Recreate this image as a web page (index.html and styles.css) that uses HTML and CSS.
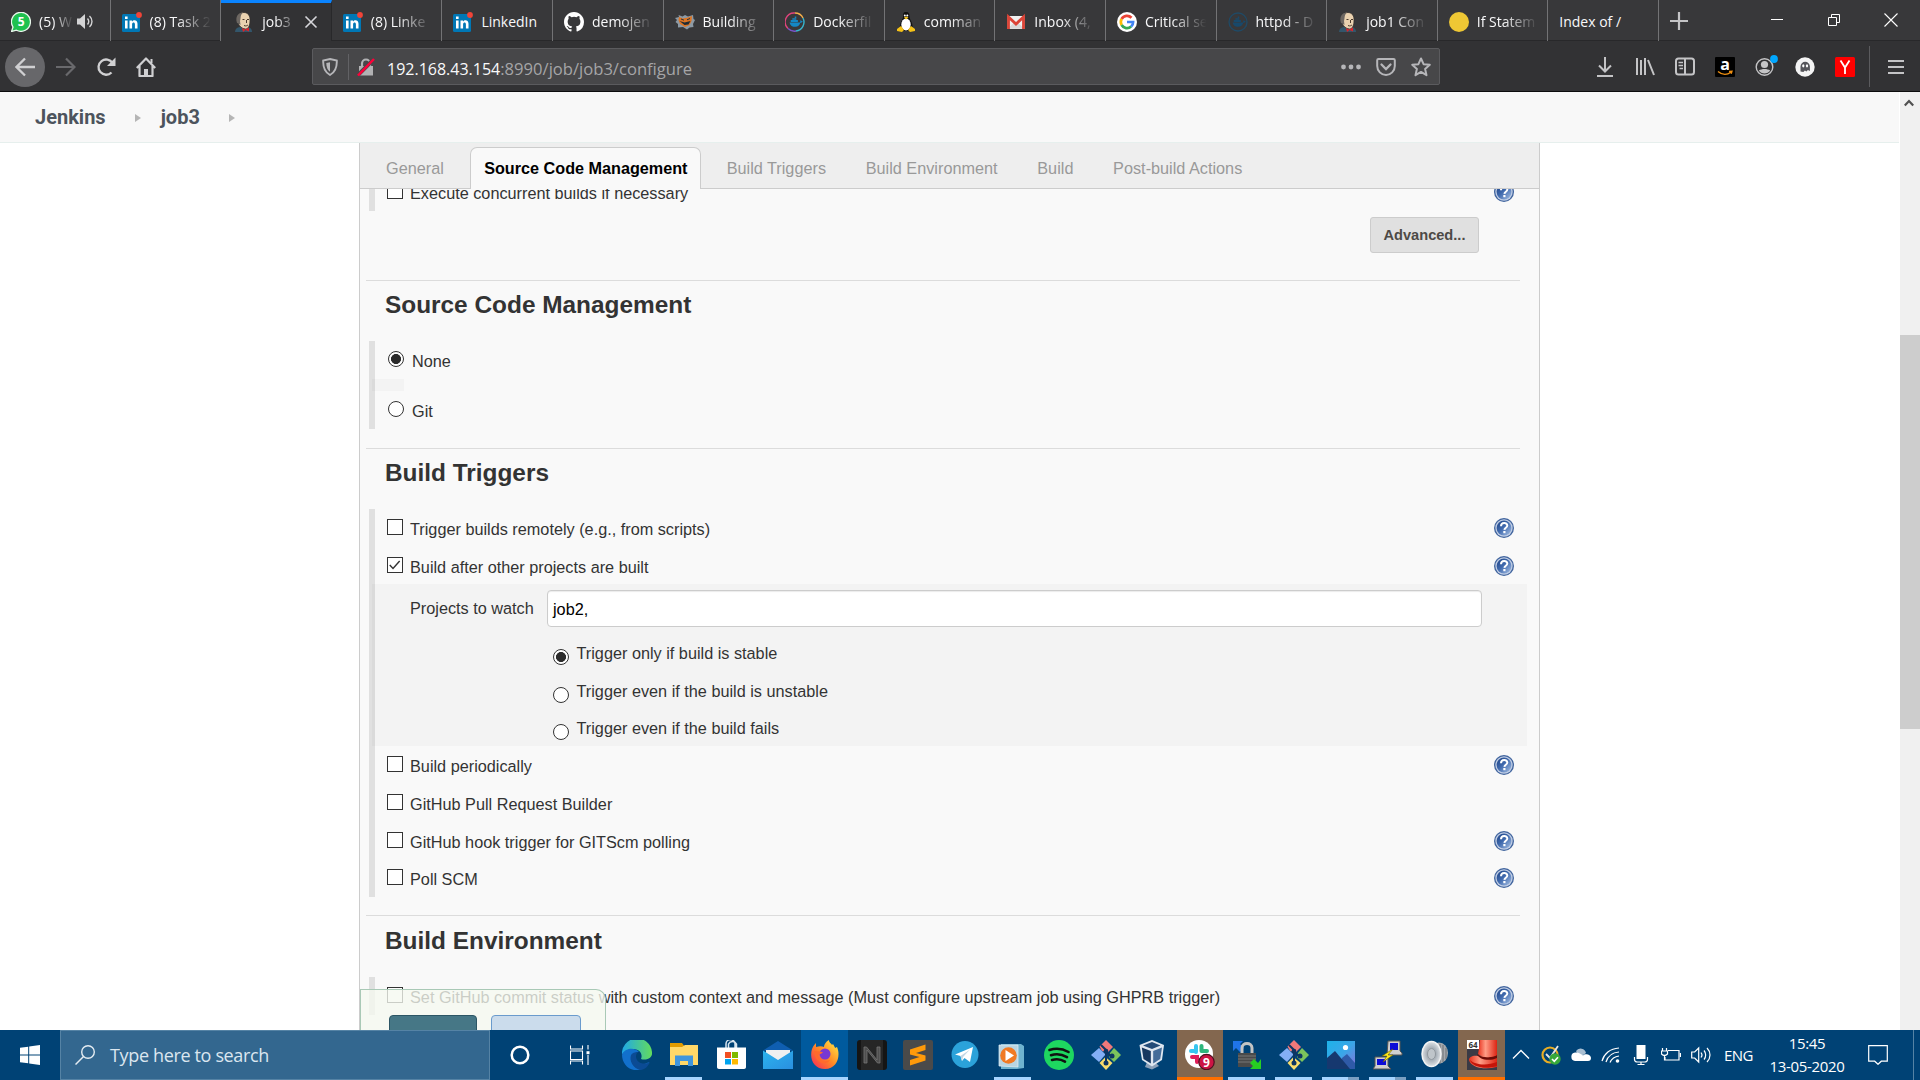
FILE: index.html
```html
<!DOCTYPE html>
<html lang="en">
<head>
<meta charset="utf-8">
<title>job3 Config [Jenkins]</title>
<link rel="stylesheet" href="styles.css">
</head>
<body>
<svg class="defs" width="0" height="0">
  <defs>
    <linearGradient id="gHelp" x1="0" y1="0" x2="1" y2="1"><stop offset="0" stop-color="#1d4284"/><stop offset=".45" stop-color="#3f69ad"/><stop offset="1" stop-color="#a9c2e6"/></linearGradient>
    <linearGradient id="gEdge" x1="0" y1="0" x2="1" y2="0"><stop offset="0" stop-color="#1fa7e8"/><stop offset="1" stop-color="#63dc5c"/></linearGradient>
    <linearGradient id="gFox" x1="1" y1="0" x2="0" y2="1"><stop offset="0" stop-color="#fff14a"/><stop offset=".5" stop-color="#ff8a24"/><stop offset="1" stop-color="#f5225b"/></linearGradient>
    <linearGradient id="gMail" x1="0" y1="0" x2="1" y2="1"><stop offset="0" stop-color="#2bb4ee"/><stop offset="1" stop-color="#2a8fe0"/></linearGradient>
    <linearGradient id="gPic" x1="0" y1="0" x2="1" y2="1"><stop offset="0" stop-color="#1db2e8"/><stop offset=".5" stop-color="#3aa6e8"/><stop offset="1" stop-color="#8a6fd8"/></linearGradient>
    <linearGradient id="gHat" x1="0" y1="0" x2="1" y2="0"><stop offset="0" stop-color="#e8301c"/><stop offset=".4" stop-color="#ff9c85"/><stop offset="1" stop-color="#dd2413"/></linearGradient>
    <radialGradient id="gSpk"><stop offset="0" stop-color="#e8e8e8"/><stop offset=".5" stop-color="#a8b0b8"/><stop offset="1" stop-color="#dfe3e6"/></radialGradient>
  </defs>
  <symbol id="linkedin" viewBox="0 0 20 20"><rect y="2" width="18" height="18" rx="1.500" fill="#0077b5"/><path d="M3 8.500h2.600v8H3zM3 4.500h2.600v2.400H3zM7.500 8.500H10v1.200c1.500-2.300 5.500-1.800 5.500 2v4.800h-2.600v-4.300c0-2.500-2.800-2.300-2.800 0v4.300H7.500z" fill="#fff"/><circle cx="17" cy="3" r="2.900" fill="#f04438"/></symbol>
  <symbol id="jenkins" viewBox="0 0 20 20"><path d="M1 20c0-3 2-4.500 5-5h7c3 0 5 2 5 5z" fill="#33566b"/><path d="M4.500 8C3.500 3 6 .5 10 .5S16.500 4 16 9c0 3-1 8-4.500 8s-6-3-7-5z" fill="#ead2b0" stroke="#33302d" stroke-width=".8"/><path d="M3 11C1 5 4 .5 9 .5 6 3 7 6 6 9l.5 4-2-1.500z" fill="#6d6762"/><path d="M8.500 7.500h2M13 7.500h2M10 13.500c2 1 3 0 4-.5M12.500 8v3" stroke="#4b3a2d" fill="none" stroke-width="1"/><path d="M8 16l3 1.500 4-2v4l-3.500-1.500L9 20z" fill="#d8232a"/></symbol>
  <symbol id="help" viewBox="0 0 20 20"><circle cx="10" cy="10" r="10" fill="#3f639d"/><circle cx="10" cy="10" r="8.700" fill="#c0cde4"/><circle cx="10" cy="10" r="7.400" fill="url(#gHelp)"/><path d="M7 8.200c0-4.200 6.300-4.200 6.300-.6 0 2.300-2.600 2-2.900 4.200" fill="none" stroke="#fff" stroke-width="2"/><rect x="9.300" y="13" width="2.200" height="2.200" fill="#fff"/></symbol>
  <symbol id="git" viewBox="0 0 30 30"><path d="M15 0l7 7-5 5-6-1-2.500-4.500z" fill="#f0787a"/><path d="M8 8l6.500 6.500L8 22 0 15z" fill="#83aef5"/><path d="M23 8l7 7-7 7-5-5 1-4z" fill="#7cc35c"/><path d="M8.500 23l6-6 7 6-6.500 7z" fill="#f8dc6c"/><path d="M10 5l5 5v15M15 12l6 5" stroke="#0d3562" stroke-width="2" fill="none"/><circle cx="15" cy="11" r="2.300" fill="#0d3562"/><circle cx="15" cy="23" r="2.500" fill="#0d3562"/><circle cx="21" cy="16" r="2.500" fill="#0d3562"/></symbol>
  <symbol id="docker" viewBox="0 0 20 20"><path d="M2.500 10.500h13c.5-1 1-2 .5-3 1.500 1 2 1.500 3 1.500-1 1.500-1.500 2-3 2-1 3-3 5-6 5-4 0-6.500-1.500-7.500-5.500z"/><path d="M4 7.500h9v2.500H4zM6 5.200h5v2H6zM9 3h2v2H9z"/></symbol>
</svg>

<div class="screen">
  <header class="tabstrip">
    <div class="tab"><svg viewBox="0 0 20 20"><path d="M.5 19.500l1.500-4.500a9.500 9.500 0 1 1 3.500 3.200z" fill="#1fc14f" stroke="#e9f7ec" stroke-width="1.300"/><text x="10.200" y="14.300" text-anchor="middle" font-size="12" font-weight="700" fill="#fff" font-family="Open Sans">5</text></svg><span class="label label-short">(5) W</span><svg class="speaker" viewBox="0 0 18 16"><path d="M0 5h3l5-4.500v15L3 11H0z" fill="#d4d4d5"/><path d="M10.500 5c1.500 1.800 1.500 4.200 0 6M12.500 2.500c3.300 3 3.300 8 0 11" fill="none" stroke="#d4d4d5" stroke-width="1.400"/></svg></div>
    <div class="tab"><svg><use href="#linkedin"/></svg><span class="label">(8) Task 2</span></div>
    <div class="tab active"><svg><use href="#jenkins"/></svg><span class="label label-short">job3</span><svg class="close" viewBox="0 0 14 14"><path d="M1.500 1.500l11 11M12.500 1.500l-11 11" stroke="#d7d7db" stroke-width="1.600"/></svg></div>
    <div class="tab"><svg><use href="#linkedin"/></svg><span class="label">(8) Linke</span></div>
    <div class="tab"><svg><use href="#linkedin"/></svg><span class="label label-full">LinkedIn</span></div>
    <div class="tab"><svg viewBox="0 0 16 16"><path fill="#fff" d="M8 0C3.580 0 0 3.580 0 8c0 3.540 2.290 6.530 5.470 7.590.4.070.55-.17.55-.38v-1.490c-2.010.37-2.530-.49-2.690-.94-.09-.23-.48-.94-.82-1.130-.28-.15-.68-.52-.01-.53.63-.01 1.080.58 1.230.82.72 1.210 1.870.87 2.330.66.07-.52.28-.87.51-1.070-1.780-.2-3.640-.89-3.640-3.950 0-.87.31-1.590.82-2.150-.08-.2-.36-1.020.08-2.120 0 0 .67-.21 2.200.82a7.600 7.600 0 0 1 4 0c1.530-1.040 2.200-.82 2.200-.82.44 1.100.16 1.920.08 2.120.51.56.82 1.270.82 2.150 0 3.070-1.870 3.750-3.650 3.950.29.25.54.73.54 1.480v2.190c0 .21.15.46.55.38A8 8 0 0 0 16 8c0-4.420-3.580-8-8-8z"/></svg><span class="label">demojen</span></div>
    <div class="tab"><svg viewBox="0 0 20 20"><path d="M0 6l4-1-.5-2 4 1.500L10 3l3 1.500 5-1.500.5 4 1.500 1-2 4 .5 3-4 .5-2.500 2-4-2.500-5 .5L3 12 .5 10 2 8z" fill="#8d9aa5"/><path d="M4 5l4 1.500 5-1 4-1.500-.5 5-2 4-4.500 2-5-3-1.500-4z" fill="#dd7422"/><path d="M4.500 9l5 1.500 6-1.500-2 3.500-4 .5z" fill="#202b34"/><path d="M6 7l3 1.200M12 7.800l3-1.300" stroke="#25303a"/></svg><span class="label">Building</span></div>
    <div class="tab"><svg viewBox="0 0 20 20"><path d="M3 16.500A9 9 0 0 1 10 1" stroke="#e0447c" stroke-width="1.400" fill="none"/><path d="M10 1a9 9 0 0 1 8 5" stroke="#f6b04a" stroke-width="1.400" fill="none"/><path d="M18 6a9 9 0 0 1-7 13" stroke="#38b6cf" stroke-width="1.400" fill="none"/><path d="M11 19a9 9 0 0 1-8-2.500" stroke="#7854c8" stroke-width="1.400" fill="none"/><use href="#docker" x="2.500" y="2" width="16" height="16" fill="#1488c6"/></svg><span class="label">Dockerfil</span></div>
    <div class="tab"><svg viewBox="0 0 20 20"><path d="M10 0c3 0 3.500 2 3.500 5 0 2 3 5 3 9 0 3-2 5-6.500 5s-6.500-2-6-5c0-4 3-7 3-9C7 2 7 0 10 0z" fill="#111"/><ellipse cx="10" cy="12.500" rx="4.700" ry="6" fill="#fff"/><circle cx="8.800" cy="3.500" r="1" fill="#fff"/><circle cx="11.300" cy="3.500" r="1" fill="#fff"/><path d="M8 5.500l2-1 2.500 1L10 7.500zM1 17l4-3 3 4-2 2-5-1zM19 17l-4-3-3 4 2 2 5-1z" fill="#f6c217"/></svg><span class="label">comman</span></div>
    <div class="tab"><svg viewBox="0 0 20 20"><path d="M1.500 4h17v13h-17z" fill="#f1f1f1"/><path d="M1.500 16.800L10 9l8.500 7.800z" fill="#d9d9d9"/><path d="M2.500 17V5L10 12l7.500-7v12" fill="none" stroke="#dc4437" stroke-width="2.800"/></svg><span class="label">Inbox (4,</span></div>
    <div class="tab"><svg viewBox="0 0 20 20"><circle cx="10" cy="10" r="10" fill="#fff"/><g fill="none" stroke-width="2.700"><path d="M14.500 5.800A6.200 6.200 0 0 0 4.600 7" stroke="#ea4335"/><path d="M4.600 7a6.200 6.200 0 0 0 0 6" stroke="#fbbc05"/><path d="M4.600 13a6.200 6.200 0 0 0 9.500 1.600" stroke="#34a853"/><path d="M14.100 14.600A6.200 6.200 0 0 0 16.100 10H10" stroke="#4285f4"/></g></svg><span class="label">Critical se</span></div>
    <div class="tab"><svg viewBox="0 0 20 20"><circle cx="10" cy="10" r="9" fill="none" stroke="#1f4a66" stroke-width="1.300"/><use href="#docker" x="2.500" y="2" width="16" height="16" fill="#18496b"/></svg><span class="label">httpd - D</span></div>
    <div class="tab"><svg><use href="#jenkins"/></svg><span class="label">job1 Con</span></div>
    <div class="tab"><svg viewBox="0 0 20 20"><circle cx="10" cy="10" r="10" fill="#eec734"/></svg><span class="label">If Statem</span></div>
    <div class="tab"><span class="label label-full">Index of /</span></div>
    <svg class="newtab" viewBox="0 0 18 18"><path d="M9 0v18M0 9h18" stroke="#c4c4c6" stroke-width="2.200"/></svg>
    <div class="winbtns">
      <svg viewBox="0 0 14 14"><path d="M1 6.500h12" stroke="#fff"/></svg>
      <svg viewBox="0 0 14 14"><path d="M1.500 4.500h8v8h-8zM4.500 4.500v-3h8v8h-3" fill="none" stroke="#fff"/></svg>
      <svg viewBox="0 0 14 14"><path d="M.5.500l13 13M13.500.500l-13 13" stroke="#fff" stroke-width="1.100"/></svg>
    </div>
  </header>

  <nav class="navbar">
    <div class="navleft">
      <span class="back"><svg viewBox="0 0 20 20"><path d="M20 10H1.500M10 1.500L1.500 10l8.500 8.500" fill="none" stroke="#d0d0d2" stroke-width="2.300"/></svg></span>
      <svg viewBox="0 0 20 20"><path d="M0 10h18.500M10 1.500l8.500 8.500-8.500 8.500" fill="none" stroke="#69696c" stroke-width="2.200"/></svg>
      <svg viewBox="0 0 20 20"><path d="M15.500 15.500a7.600 7.600 0 1 1 1-9.500" fill="none" stroke="#d0d0d2" stroke-width="2.300"/><path d="M19.500.500v8.500H11z" fill="#d0d0d2"/></svg>
      <svg viewBox="0 0 20 20"><path d="M.8 11L10 1.500l9.200 9.500M3.500 9v10h13V9" fill="none" stroke="#d0d0d2" stroke-width="2.200" stroke-linejoin="round"/><path d="M8 12h4v7H8z" fill="#d0d0d2"/><path d="M14.500 2h2v4h-2z" fill="#d0d0d2"/></svg>
    </div>
    <div class="urlbar">
      <svg class="shield" viewBox="0 0 16 18"><path d="M8 1l6.800 1.500c.3 7-1.300 11.500-6.800 14.500C2.500 14 .9 9.500 1.200 2.500z" fill="none" stroke="#b6b6b9" stroke-width="1.900"/><path d="M8 4.200v9.600C5.300 12 4.400 9 4.300 5z" fill="#b6b6b9"/></svg>
      <i class="urlsep"></i>
      <svg class="lock" viewBox="0 0 18 18"><path d="M2 8h14v9.500H2z" fill="#b1b1b3"/><path d="M5 8.500V5.500a4 4 0 0 1 8 0v3" fill="none" stroke="#b1b1b3" stroke-width="2.200"/><path d="M1 17L17 1" stroke="#48484b" stroke-width="4"/><path d="M1 17.500L17 1" stroke="#ff0039" stroke-width="2.500"/></svg>
      <span class="url"><b>192.168.43.154</b>:8990/job/job3/configure</span>
      <div class="urlicons">
        <svg viewBox="0 0 20 20"><g fill="#b6b6b9"><circle cx="2.500" cy="10" r="2.400"/><circle cx="10" cy="10" r="2.400"/><circle cx="17.500" cy="10" r="2.400"/></g></svg>
        <svg viewBox="0 0 20 20"><path d="M2.500 2h15c.8 0 1.300.5 1.300 1.300V9c0 5-4 9-8.800 9S1.200 14 1.200 9V3.300C1.200 2.500 1.700 2 2.500 2z" fill="none" stroke="#b6b6b9" stroke-width="2"/><path d="M5.500 7.500L10 12l4.500-4.500" fill="none" stroke="#b6b6b9" stroke-width="2.300" stroke-linecap="round"/></svg>
        <svg viewBox="0 0 20 20"><path d="M10 1.500l2.600 5.700 6.200.6-4.700 4.100 1.400 6.300-5.500-3.300-5.500 3.300 1.400-6.300-4.700-4.100 6.200-.6z" fill="none" stroke="#b6b6b9" stroke-width="2" stroke-linejoin="round"/></svg>
      </div>
    </div>
    <div class="navright">
      <svg viewBox="0 0 20 20"><path d="M10 0v14M4 8.500l6 6 6-6M2 19h16" fill="none" stroke="#c4c4c6" stroke-width="2"/></svg>
      <svg viewBox="0 0 20 20"><path d="M2 1v17M6 3v15M10 1v17M13 3l6 15" fill="none" stroke="#c4c4c6" stroke-width="2"/></svg>
      <svg viewBox="0 0 20 20"><rect x="1" y="1.500" width="18" height="16" rx="2.500" fill="none" stroke="#c4c4c6" stroke-width="2"/><path d="M10 2v15" stroke="#c4c4c6" stroke-width="2"/><path d="M3.500 5.500H8M3.500 8.500H8M4.500 11.500H8" stroke="#c4c4c6" stroke-width="1.300"/></svg>
      <svg viewBox="0 0 20 20"><rect width="20" height="20" rx="1" fill="#000"/><text x="10" y="12.500" text-anchor="middle" font-size="16" font-weight="700" fill="#fff" font-family="Open Sans">a</text><path d="M3 14.500c4 3.500 9 3.500 13 .8M14 14.500l3-.3-.8 2.500" fill="none" stroke="#f29111" stroke-width="1.300"/></svg>
      <svg viewBox="0 0 20 20" overflow="visible"><circle cx="9.500" cy="10" r="8.300" fill="none" stroke="#c4c4c6" stroke-width="1.400"/><circle cx="9.500" cy="7.500" r="3.600" fill="#c4c4c6"/><path d="M3.800 13.500c3-2 8.500-2 11.400 0-2.500 4-8.900 4-11.400 0z" fill="#c4c4c6"/><circle cx="19" cy="2" r="3.900" fill="#00a7ff"/></svg>
      <svg viewBox="0 0 20 20"><circle cx="10" cy="10" r="9.700" fill="#f4f4f4"/><path d="M5.500 14.500V9.500a4.700 4.700 0 0 1 9.400 0v4.500l-2-1-1.500 1.500-1.500-1-1.500 1.500z" fill="#55555a"/><ellipse cx="8.300" cy="8.800" rx="1.100" ry="1.600" fill="#fff"/><ellipse cx="12" cy="8.800" rx="1.100" ry="1.600" fill="#fff"/></svg>
      <svg viewBox="0 0 20 20"><rect width="20" height="20" rx="1.500" fill="#f00"/><path d="M5.500 3.500L10 10.500l4.500-7M10 10v7" fill="none" stroke="#fff" stroke-width="1.800"/></svg>
    </div>
    <i class="navsep"></i>
    <svg class="menu" viewBox="0 0 16 18"><path d="M0 3h16M0 9h16M0 15h16" stroke="#c4c4c6" stroke-width="2.200"/></svg>
  </nav>

  <div class="viewport">
    <main class="page">
      <div class="breadcrumb"><b>Jenkins</b><i></i><b>job3</b><i></i></div>
      <div class="panel">
        <div class="configtabs">
          <span>General</span><span class="current">Source Code Management</span><span>Build Triggers</span><span>Build Environment</span><span>Build</span><span>Post-build Actions</span>
        </div>
        <div class="form">
          <div class="group group-top">
            <div class="row"><i class="check"></i><span>Execute concurrent builds if necessary</span><svg class="help"><use href="#help"/></svg></div>
          </div>
          <div class="advanced"><button>Advanced...</button></div>
          <section>
            <h2>Source Code Management</h2>
            <div class="group">
              <div class="row row-scm"><i class="radio on"></i><span>None</span></div>
              <div class="spacer"></div>
              <div class="row row-scm"><i class="radio"></i><span>Git</span></div>
            </div>
          </section>
          <section>
            <h2>Build Triggers</h2>
            <div class="group">
              <div class="row"><i class="check"></i><span>Trigger builds remotely (e.g., from scripts)</span><svg class="help"><use href="#help"/></svg></div>
              <div class="row"><i class="check"><svg viewBox="0 0 12 12"><path d="M1.500 6l2.800 3L10 2.500" fill="none" stroke="#333" stroke-width="1.200"/></svg></i><span>Build after other projects are built</span><svg class="help"><use href="#help"/></svg></div>
              <div class="nested">
                <div class="field"><label>Projects to watch</label><div class="input">job2,</div></div>
                <div class="option"><i class="radio on"></i><span>Trigger only if build is stable</span></div>
                <div class="option"><i class="radio"></i><span>Trigger even if the build is unstable</span></div>
                <div class="option"><i class="radio"></i><span>Trigger even if the build fails</span></div>
              </div>
              <div class="row"><i class="check"></i><span>Build periodically</span><svg class="help"><use href="#help"/></svg></div>
              <div class="row"><i class="check"></i><span>GitHub Pull Request Builder</span></div>
              <div class="row"><i class="check"></i><span>GitHub hook trigger for GITScm polling</span><svg class="help"><use href="#help"/></svg></div>
              <div class="row"><i class="check"></i><span>Poll SCM</span><svg class="help"><use href="#help"/></svg></div>
            </div>
          </section>
          <section>
            <h2>Build Environment</h2>
            <div class="group">
              <div class="row"><i class="check"></i><span>Set GitHub commit status with custom context and message (Must configure upstream job using GHPRB trigger)</span><svg class="help"><use href="#help"/></svg></div>
            </div>
          </section>
        </div>
        <div class="sticker"><i class="save"></i><i class="apply"></i></div>
      </div>
    </main>
    <aside class="scroll"><svg viewBox="0 0 10 8"><path d="M.8 6.500L5 2l4.200 4.500" fill="none" stroke="#505050" stroke-width="2.200"/></svg><i></i></aside>
  </div>

  <footer class="taskbar">
    <div class="start"><svg viewBox="0 0 20 20"><path d="M0 2.800L8.200 1.700v7.800H0zM9.200 1.500L20 0v9.500H9.200zM0 10.500h8.200v7.800L0 17.200zM9.200 10.500H20V20L9.200 18.500z" fill="#fff"/></svg></div>
    <div class="search"><svg viewBox="0 0 20 20"><circle cx="13" cy="7" r="6.300" fill="none" stroke="#e4ecf2" stroke-width="1.400"/><path d="M8.500 11.500L.5 19.500" stroke="#e4ecf2" stroke-width="1.500"/></svg><span>Type here to search</span></div>
    <div class="sys"><svg viewBox="0 0 20 20"><circle cx="10" cy="10" r="8.300" fill="none" stroke="#fff" stroke-width="2.500"/></svg></div>
    <div class="sys"><svg viewBox="0 0 20 20"><path d="M.5.500v3.500h12V.500M.5 6h12v8.500H.5zM.5 19.500V16h12v3.500M18 0v4.500M18 10v10" fill="none" stroke="#fff" stroke-width="1.100"/><path d="M16.500 6.200h3v3h-3z" fill="#fff"/></svg></div>
    <div class="apps">
      <div class="app"><svg viewBox="0 0 30 30"><path d="M0 15A15 15 0 0 1 30 12c1 6-6 9-11 7 3-8-6-12-13-9-4 2-6 4-6 5z" fill="url(#gEdge)"/><path d="M0 15c1-6 12-9 17-3-5-1-7 7-1 11 4 2 8 1 11-1-3 7-10 9-15 8C5 29 0 22 0 15z" fill="#1270cc"/><path d="M9 15c-2 6 2 13 9 15 4 0 8-3 10-8-5 3-13 2-14-5 0-3 1-4 2-5-3 0-6 1-7 3z" fill="#0b4b94"/></svg></div>
      <div class="app run"><svg viewBox="0 0 30 30"><path d="M1 3h12l3 4H1z" fill="#e09b00"/><path d="M1 7h12l3-2h13v20H1z" fill="#ffd868"/><path d="M6 26V15.500h18V26h-5v-5h-8v5z" fill="#3f95dc"/></svg></div>
      <div class="app"><svg viewBox="0 0 30 30"><path d="M10 10V4a4.500 4.500 0 0 1 9 0v6M12.500 8V4a4.500 4.500 0 0 1 8 0v4" fill="none" stroke="#d9e6ef" stroke-width="1.500"/><path d="M1 7.500h29V27c0 1.200-.8 2-2 2H3c-1.200 0-2-.8-2-2z" fill="#fff"/><path d="M9 12h6v6H9z" fill="#f25022"/><path d="M16 12h6v6h-6z" fill="#7fba00"/><path d="M9 19h6v5.500H9z" fill="#00a4ef"/><path d="M16 19h6v5.500h-6z" fill="#ffb900"/></svg></div>
      <div class="app"><svg viewBox="0 0 30 30"><path d="M0 10.500L15 1l15 9.500z" fill="#0f5eb0"/><path d="M3 10h24v10H3z" fill="#f0f0f0"/><path d="M0 10.500L15 20l15-9.500V29H0z" fill="url(#gMail)"/></svg></div>
      <div class="app run current"><svg viewBox="0 0 30 30"><path d="M2 9c1-3 3-5 4-6v4c3-1 6-1 8 0 0-3 3-6 5-7 0 3 2 3 3 5l1-1c1 2 2 3 2 4l2-1c4 9 0 22-12 22C4 29-1 19 2 9z" fill="url(#gFox)"/><circle cx="15" cy="14" r="5.500" fill="#7838d3"/><path d="M4 11c5 0 6 1 9 1-2 3-6 2-5 5 1 4 7 5 12 3-4 6-15 4-16-9z" fill="#ff6a2c"/></svg></div>
      <div class="app"><svg viewBox="0 0 30 30"><rect y="0" width="30" height="30" rx="3" fill="#151515"/><path d="M4 0h22v30H4z" fill="#262626"/><path d="M7 23V7h2.500L20 20V7h3v16h-2.500L10 10v13z" fill="#4f4f4f" stroke="#777" stroke-width=".8"/></svg></div>
      <div class="app"><svg viewBox="0 0 30 30"><rect width="30" height="30" rx="2" fill="#4a4a4a"/><path d="M7 9.500l15.500-5v5.500l-9.500 3 9.500 2.500v5L7 25.500V20l9.500-3L7 14.500z" fill="#ff9a0a"/></svg></div>
      <div class="app"><svg viewBox="0 0 30 30"><circle cx="15" cy="14.500" r="13.500" fill="#2ba2da"/><path d="M5 14.500L23 7l-3 15-5.500-4-2.500 3-1.500-5z" fill="#fff"/><path d="M10.500 16L20 9.500l-7 7.500-1 4z" fill="#c3d7e5"/></svg></div>
      <div class="app run"><svg viewBox="0 0 30 30"><path d="M4 4h20l3 2v22l-7 1H4z" fill="#6fb3cf"/><path d="M2 5h19v22l-19-1z" fill="#b9d5e2" stroke="#e2eff5" stroke-width=".7"/><circle cx="11.500" cy="15.500" r="8.300" fill="#f07a24"/><path d="M8.500 10l8.500 5.500L8.500 21z" fill="#fff"/></svg></div>
      <div class="app"><svg viewBox="0 0 30 30"><circle cx="15" cy="15" r="15" fill="#1ed760"/><path d="M5.500 10c6-2 13-1.500 19 2M7 15.200c5-1.700 11-1 16 1.900M8 20c4.500-1.300 9-.8 13 1.600" fill="none" stroke="#111" stroke-width="2.600" stroke-linecap="round"/></svg></div>
      <div class="app"><svg><use href="#git"/></svg></div>
      <div class="app"><svg viewBox="0 0 30 30"><path d="M9 22h8l4 4-7 3.500-7-2.500z" fill="#8ba0b8"/><path d="M14 0l12 5-2 15-10 6.500L4 20 1.500 5z" fill="#dfe7f0"/><path d="M14 2l8.500 3.500L14 9 5 5.500z" fill="#234b78"/><path d="M3.800 7.500L12.800 11v12.500L5.500 19z" fill="#16375f"/><path d="M24 7.500L15.200 11v12.500l7-4.500z" fill="#446c99"/></svg></div>
      <div class="app alert"><svg viewBox="0 0 30 30"><circle cx="14" cy="14" r="14" fill="#fff"/><g stroke-width="4" stroke-linecap="round"><path d="M11 6v6M6 11h3" stroke="#36c5f0"/><path d="M16.500 6v5M19 11h3" stroke="#2eb67d"/><path d="M7 17h5v5" stroke="#e01e5a" fill="none"/></g><circle cx="21.500" cy="22" r="7.700" fill="#cc1444" stroke="#4e1220" stroke-width="1.200"/><text x="21.500" y="26.500" text-anchor="middle" font-size="12" font-weight="700" fill="#fff" font-family="Open Sans">9</text></svg></div>
      <div class="app run"><svg viewBox="0 0 30 30"><path d="M1 1h10L8 4l4 4-4 4-4-4-3 3z" fill="#1f74e8"/><path d="M10 14V8c0-6 10-6 10 0v6" fill="none" stroke="#c4c4c4" stroke-width="3"/><path d="M6 13h18v14H6z" fill="#4a4a4a"/><path d="M6 16h18M6 19h18M6 22h18" stroke="#777"/><path d="M29 29H18l3-3-3-3 4-4 4 4 3-4z" fill="#27cf22"/></svg></div>
      <div class="app run"><svg><use href="#git"/></svg></div>
      <div class="app run stack"><svg viewBox="0 0 30 30"><path d="M1 1h28v28H1z" fill="url(#gPic)"/><circle cx="19.500" cy="7.500" r="2.600" fill="#fff"/><path d="M16 18l5-4 8 9v6H14z" fill="#2f5aa8"/><path d="M1 18l8-7 15 18H1z" fill="#16386f"/></svg></div>
      <div class="app run stack"><svg viewBox="0 0 30 30"><path d="M15 1h12v10l2 2v2H14z" fill="#cfcfcf" stroke="#555"/><path d="M17 3h8v7h-8z" fill="#0b0bd6"/><path d="M2 17h13v9l3 3H0l2-3z" fill="#cfcfcf" stroke="#555"/><path d="M4 19h9v6H4z" fill="#0b0bd6"/><path d="M20 9l-11 7h5l-4 6 10-7h-5z" fill="#ffec1e" stroke="#6a5d00" stroke-width=".6"/></svg></div>
      <div class="app run"><svg viewBox="0 0 30 30"><ellipse cx="19" cy="13" rx="9" ry="10.500" fill="#a5a9ad"/><path d="M20 4v20M23 5v17M26 8v11" stroke="#6c7175"/><ellipse cx="11.500" cy="14" rx="9.500" ry="12.500" fill="url(#gSpk)" stroke="#f4f4f4" stroke-width="1.500"/><ellipse cx="11.500" cy="14" rx="4" ry="5.500" fill="#bfc5ca" stroke="#90979d"/></svg></div>
      <div class="app alert"><svg viewBox="0 0 30 30"><path d="M0 0h30v30H0z" fill="#3a3a45"/><path d="M30 14v13C18 30 4 28 2 20c0-3 4-5 9-4z" fill="url(#gHat)"/><path d="M3 20c5 5 17 6 27 2v4C18 30 5 27 3 20z" fill="#c41509"/><path d="M10 14c4 4 14 4 20 1v3c-8 4-19 1-20-4z" fill="#6d0b06"/><path d="M13 0h17v15c-5 3-14 3-19-1 1-4 1-9 2-14z" fill="url(#gHat)"/><path d="M0 0h12v9H0z" fill="#fff"/><text x="6" y="7.500" text-anchor="middle" font-size="8" font-weight="700" fill="#333" font-family="Open Sans">64</text></svg></div>
    </div>
    <div class="tray">
      <svg viewBox="0 0 20 20"><path d="M2 13.500l8-8 8 8" fill="none" stroke="#fff" stroke-width="1.300"/></svg>
      <svg viewBox="0 0 20 20"><circle cx="9" cy="10" r="7.500" fill="none" stroke="#e8ad25" stroke-width="2.200"/><path d="M5 9l4 4L17 1" fill="none" stroke="#e5e5e5" stroke-width="1.800"/><circle cx="14" cy="14" r="5.700" fill="#38a83a"/><path d="M11 14l2.300 2.300 3.700-4" fill="none" stroke="#fff" stroke-width="1.600"/></svg>
      <svg viewBox="0 0 20 20"><path d="M5 6a5.500 5.500 0 0 1 10 2l-7 5z" fill="#a9bfd2"/><path d="M4 16a4.300 4.300 0 0 1 0-8.500c3-.5 6 1 8 3 2-2.500 8-1 8 2.500 0 2-1 3-3 3z" fill="#fff"/></svg>
      <svg viewBox="0 0 20 20"><g fill="none" stroke="#fff" stroke-width="1.200"><path d="M1 16C3 9 9 3.500 18 3M5 17C6.500 12 11 7.500 18 7M9 17.500c1.500-3.500 4.500-6 9-6.500"/></g><circle cx="16.500" cy="16" r="1.800" fill="#fff"/></svg>
      <svg viewBox="0 0 20 20"><path d="M5.500 0h9v14h-9z" fill="#fff"/><path d="M3.500 12v2.500c0 2 1 2.500 3 2.500h7c2 0 3-.5 3-2.500V12M10 17v2.500M6.500 19.500h7" fill="none" stroke="#fff" stroke-width="1.200"/></svg>
      <svg viewBox="0 0 20 20"><path d="M7 5.500h11v9.500H4v-3M19.500 8v4M1.500 3v3M5.500 3v3M.5 6h6v3c-2 2-4 2-6 0zM3.500 10.500V15H5" fill="none" stroke="#fff" stroke-width="1.200"/></svg>
      <svg viewBox="0 0 20 20"><path d="M.7 7h3l4-4v14l-4-4h-3z" fill="none" stroke="#fff" stroke-width="1.200"/><path d="M10 7.500c1.200 1.500 1.200 3.500 0 5M13 5.500c2.200 2.500 2.200 6.500 0 9M16 3c4 4 4 10 0 14" fill="none" stroke="#fff" stroke-width="1.200"/></svg>
    </div>
    <span class="lang">ENG</span>
    <div class="clock"><span>15:45</span><span>13-05-2020</span></div>
    <svg class="notif" viewBox="0 0 20 20"><path d="M.7.700h18.600v15.500h-6L10 19.300l-3.300-3.100h-6z" fill="none" stroke="#fff" stroke-width="1.200"/></svg>
    <i class="peek"></i>
  </footer>
</div>
</body>
</html>
```
FILE: styles.css
```css
* { box-sizing: border-box; }
body { margin: 0; font-family: "Liberation Sans", Arial, sans-serif; font-size: 16.25px; color: #333; }
svg, i { display: block; flex: none; }
.defs { position: absolute; }
.screen { width: 1920px; height: 1080px; overflow: hidden; display: flex; flex-direction: column; }

/* Browser tab strip */
.tabstrip { flex: none; height: 41px; display: flex; background: #38383a; font-family: "Open Sans", sans-serif; font-size: 14px; color: #f9f9fa; border-bottom: 1px solid #28282a; }
.tab { width: 110.600px; flex: none; height: 41px; padding: 2px 0 0 11px; display: flex; align-items: center; gap: 5px; border-right: 1px solid #737375; }
.tab > svg { width: 20px; height: 20px; }
.tab.active { background: #323234; border-top: 3px solid #0a84ff; padding: 0 0 0 13px; border-right-color: #28282a; }
.label { flex: none; width: 70px; padding-left: 3px; white-space: nowrap; line-height: 22px; mask-image: linear-gradient(90deg, #000 42%, transparent 92%); }
.label-short { width: 41px; }
.tab .label-full { width: 75px; mask-image: none; }
.tab > .label-full:first-child { padding-left: 0; }
.tab .speaker { width: 18px; height: 17px; margin-left: -5px; }
.tab .close { width: 14px; height: 14px; margin-left: -1px; }
.newtab { width: 18px; height: 18px; margin: 12px 0 0 11px; }
.winbtns { margin-left: auto; padding: 13px 22px 0 0; display: flex; gap: 43px; }
.winbtns svg { width: 14px; height: 14px; }

/* Browser toolbar */
.navbar { height: 51px; flex: none; display: flex; align-items: center; padding-top: 1px; background: #323234; border-bottom: 1px solid #0c0c0d; }
.navleft { width: 312px; padding-left: 5px; display: flex; align-items: center; gap: 20px; }
.navleft svg { width: 20px; height: 20px; }
.navleft .back { width: 40px; height: 40px; margin-right: -9px; border-radius: 50%; background: #67676a; display: grid; place-items: center; }
.urlbar { width: 1128px; height: 37px; display: flex; align-items: center; background: #474749; border: 1px solid #5b5b5e; border-radius: 2px; font-family: "Open Sans", sans-serif; }
.shield { width: 16px; height: 18px; margin-left: 9px; }
.urlsep { width: 1px; height: 26px; margin: 0 8px 0 10px; background: #626265; }
.lock { width: 18px; height: 18px; }
.url { margin-left: 12px; padding-top: 3px; font-size: 16.600px; color: #a5a5a7; white-space: nowrap; }
.url b { font-weight: 400; font-size: 16px; color: #f9f9fa; }
.urlicons { margin-left: auto; margin-right: 8px; display: flex; gap: 15px; }
.urlicons svg { width: 20px; height: 20px; }
.navright { margin-left: 155px; display: flex; gap: 20px; }
.navright svg { width: 20px; height: 20px; }
.navsep { width: 1px; height: 41px; margin-left: 14px; background: #5b5b5e; }
.menu { width: 16px; height: 18px; margin-left: 18px; }

/* Jenkins page */
.viewport { height: 938px; flex: none; display: flex; background: #fff; }
.page { width: 1899px; flex: none; display: flex; flex-direction: column; }
.breadcrumb { height: 51px; flex: none; padding-left: 35px; display: flex; align-items: center; background: #f8f8f8; border-bottom: 1px solid #e6efed; font-family: Roboto, sans-serif; font-size: 20px; color: #4d545d; }
.breadcrumb b { line-height: 24px; }
.breadcrumb i { border-left: 6px solid #b5b5b5; border-top: 4.500px solid transparent; border-bottom: 4.500px solid transparent; margin: 1px 20px 0 29px; }
.panel { width: 1181px; height: 887px; margin-left: 359px; border: solid #ccc; border-width: 0 1px; background: #f9f9f9; position: relative; overflow: hidden; }
.configtabs { height: 46px; display: flex; align-items: flex-end; gap: 11.700px; padding-left: 12px; background: #eee; border-bottom: 1px solid #ccc; color: #999; }
.configtabs span { height: 41px; padding: 0 13px; line-height: 41px; border: 1px solid transparent; border-bottom: 0; white-space: nowrap; }
.configtabs .current { background: #f9f9f9; border-color: #ccc; border-radius: 7px 7px 0 0; color: #000; font-weight: 700; font-size: 16.200px; margin: 0 -.5px -1px .7px; height: 42px; }
.form { height: 841px; overflow: hidden; }
.group { margin-left: 9px; width: 1158px; border-left: 6px solid #e0e0e0; }
.group-top { margin-top: -16px; }
.row { height: 37.670px; padding: 10px 13px 0 12px; display: flex; align-items: flex-start; }
.row span { line-height: 20px; margin-left: 7px; white-space: nowrap; }
.check { width: 16px; height: 16px; border: 1px solid #333; background: #fff; }
.check svg { width: 14px; height: 14px; }
.radio { width: 16px; height: 16px; border: 1px solid #333; border-radius: 50%; background: #fff; }
.radio.on { background: radial-gradient(circle, #2b2b2b 0 4.700px, #fff 5.300px); }
.help { width: 20px; height: 20px; margin: -1px 0 0 auto; }
.advanced { height: 69.330px; padding: 6px 60px 0 0; display: flex; justify-content: flex-end; }
.advanced button { width: 109px; height: 36px; padding: 0; font: 700 14.600px "Liberation Sans", Arial, sans-serif; color: #4d4a46; background: #e0e0e0; border: 1px solid #ccc; border-radius: 3px; }
section { padding-bottom: 19px; }
section + section { padding-bottom: 18px; }
section::before { content: ""; display: block; width: 1154px; height: 1px; margin-left: 6px; background: #dcdcdc; }
h2 { height: 60px; margin: 0; padding: 9px 0 0 25px; font-size: 24.400px; line-height: 30px; }
section:last-child h2 { height: 61px; padding-top: 10px; }
.row-scm { height: 38px; padding-left: 13px; }
.row-scm span { margin-left: 8px; }
.spacer { width: 32px; height: 12px; margin-left: -3px; background: rgba(0,0,0,.025); }
.nested { height: 162px; margin-left: -3px; width: 1155px; background: rgba(0,0,0,.025); padding-top: 5px; }
.field { display: flex; align-items: center; height: 38px; margin-bottom: 7px; padding-left: 38px; }
.field label { width: 137px; padding-top: 1px; }
.input { width: 935px; height: 37px; padding-left: 5px; line-height: 36px; background: #fff; border: 1px solid #ccc; border-radius: 4px; box-shadow: inset 0 1px 1px rgba(0,0,0,.08); color: #000; }
.option { height: 37.400px; padding: 15px 0 0 181px; display: flex; }
.option span { margin: -6px 0 0 7.500px; line-height: 20px; }
.sticker { position: absolute; left: 0; bottom: 0; width: 246px; height: 41px; padding: 25px 0 0 28px; display: flex; gap: 14px; background: rgba(245,249,239,.78); border: 1px solid #a9c9b6; border-bottom: 0; border-radius: 0 10px 0 0; overflow: hidden; }
.save, .apply { width: 88px; height: 34px; background: #467786; border: 1px solid #2c5665; border-radius: 4px; }
.apply { width: 90px; background: #cbdcec; border-color: #6a9bcd; }
.scroll { width: 20px; margin-left: 1px; background: #f0f0f0; padding-top: 7px; display: flex; flex-direction: column; }
.scroll svg { width: 10px; height: 8px; margin-left: 4px; }
.scroll i { height: 394px; margin-top: 228px; background: #cdcdcd; }

/* Windows taskbar */
.taskbar { height: 50px; flex: none; display: flex; background: #004275; font-family: "Open Sans", sans-serif; color: #fff; }
.start { width: 60px; display: grid; place-items: center; }
.start svg { width: 20px; height: 20px; }
.search { width: 430px; flex: none; display: flex; align-items: center; gap: 15px; padding-left: 14px; background: #33678f; border: 1px solid #5583a5; font-size: 18px; letter-spacing: -.35px; color: #dbe6ef; }
.search svg { width: 20px; height: 20px; }
.sys { width: 60px; display: grid; place-items: center; }
.sys svg { width: 20px; height: 20px; }
.sys + .sys { width: 63.500px; padding-right: 3px; }
.apps { display: flex; }
.app { width: 46.930px; flex: none; display: grid; place-items: center; position: relative; }
.app svg { width: 30px; height: 30px; }
.app.run::after { content: ""; position: absolute; left: 5px; right: 5px; bottom: 0; height: 3px; background: #a6d4ff; }
.app.stack::after { background: linear-gradient(90deg, #a6d4ff 70%, #7a9fc2 70%); }
.app.current { background: #005a9e; }
.app.current::after { left: 0; right: 0; }
.app.alert { background: #83674f; border-bottom: 3px solid #ff6f00; }
.app.alert svg { margin-top: 3px; }
.tray { display: flex; align-items: center; gap: 10px; margin-left: 6px; }
.tray svg { width: 20px; height: 20px; }
.lang { margin-left: 13px; line-height: 50px; font-size: 15px; letter-spacing: -.6px; width: 29px; white-space: nowrap; }
.clock { width: 108px; display: flex; flex-direction: column; align-items: center; padding-top: 2px; font-size: 15px; line-height: 23px; letter-spacing: -.3px; }
.notif { width: 20px; height: 20px; margin: 15px 0 0 7px; }
.peek { width: 1px; margin-left: 25px; background: #5583a5; }
```
